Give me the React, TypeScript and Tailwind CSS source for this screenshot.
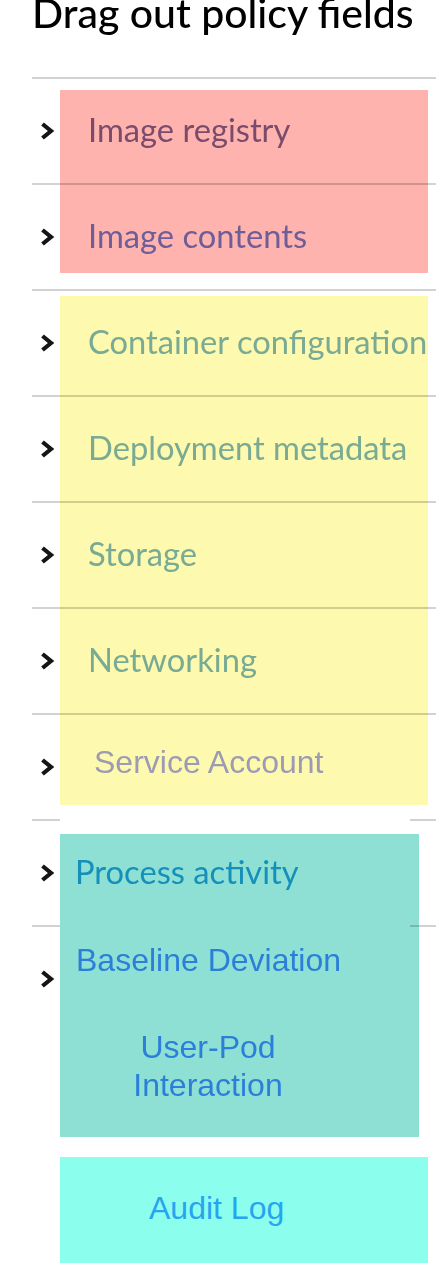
const rows = [
  { split: false },
  { split: false },
  { split: false },
  { split: false },
  { split: false },
  { split: false },
  { split: false },
  { split: true },
  { split: true },
];

const Chevron = () => (
  <svg width="15" height="18" viewBox="0 0 15 18" className="shrink-0">
    <polyline points="2.5,2 11,9 2.5,16" fill="none" stroke="#151515" strokeWidth="4.2" strokeLinejoin="miter" />
  </svg>
);

const App = () => {
  return (
    <div className="relative w-[436px] h-[1280px] overflow-hidden bg-white font-['Lato',sans-serif]">
      <h1 className="-mt-[8px] pl-[32px] text-[41px] leading-[41px] font-medium text-black whitespace-nowrap">
        Drag out policy fields
      </h1>

      <div className="mt-[44px] ml-8">
        {rows.map((r, i) => (
          <div key={i} className="h-[106px] flex flex-col">
            {r.split ? (
              <div className="flex h-[1.5px]">
                <div className="w-[28px] bg-[#d2d2d2] mix-blend-multiply" />
                <div className="flex-1" />
                <div className="w-[26px] bg-[#d2d2d2] mix-blend-multiply" />
              </div>
            ) : (
              <div className="h-[1.5px] bg-[#d2d2d2]" />
            )}
            <div className="flex-1 flex items-center pl-[8px]">
              <Chevron />
            </div>
          </div>
        ))}
      </div>

      {/* group highlights laid over the list */}
      <div className="absolute left-[60px] top-[90px] w-[368px] h-[183px] bg-[#feb3ae] mix-blend-multiply flex flex-col gap-[66px] pt-[20px] pl-[28px] text-[32.7px] leading-[40px]">
        <span className="text-[#7b4b6c]">Image registry</span>
        <span className="text-[#6e5d98]">Image contents</span>
      </div>

      <div className="absolute left-[60px] top-[296px] w-[368px] h-[509px] bg-[#fdf9ae] mix-blend-multiply flex flex-col gap-[66px] pt-[26px] pl-[28px] text-[32.7px] leading-[40px] text-[#79aa94] whitespace-nowrap">
        <span>Container configuration</span>
        <span>Deployment metadata</span>
        <span>Storage</span>
        <span>Networking</span>
        <span className="-mt-[4px] pl-[6px] font-['Liberation_Sans',Arial,sans-serif] text-[32px] text-[#9c9bb3]">Service Account</span>
      </div>

      <div className="absolute left-[60px] top-[834px] w-[359px] h-[303px] bg-[#8ee0d4] mix-blend-multiply flex flex-col gap-[48px] pt-[18px] leading-[40px]">
        <span className="pl-[15px] text-[32.7px] text-[#1590ba]">Process activity</span>
        <span className="pl-[16px] font-['Liberation_Sans',Arial,sans-serif] text-[32px] text-[#2b7fd8]">Baseline Deviation</span>
        <span className="ml-[48px] w-[200px] text-center font-['Liberation_Sans',Arial,sans-serif] text-[32px] leading-[38px] text-[#2b7fd8]">
          User-Pod Interaction
        </span>
      </div>

      <div className="absolute left-[60px] top-[1157px] w-[368px] h-[106px] bg-[#8cfeed] flex items-center pl-[89px] pb-[4px]">
        <span className="font-['Liberation_Sans',Arial,sans-serif] text-[32px] leading-[38px] text-[#27a4f0]">Audit Log</span>
      </div>
    </div>
  );
};

export default App;
